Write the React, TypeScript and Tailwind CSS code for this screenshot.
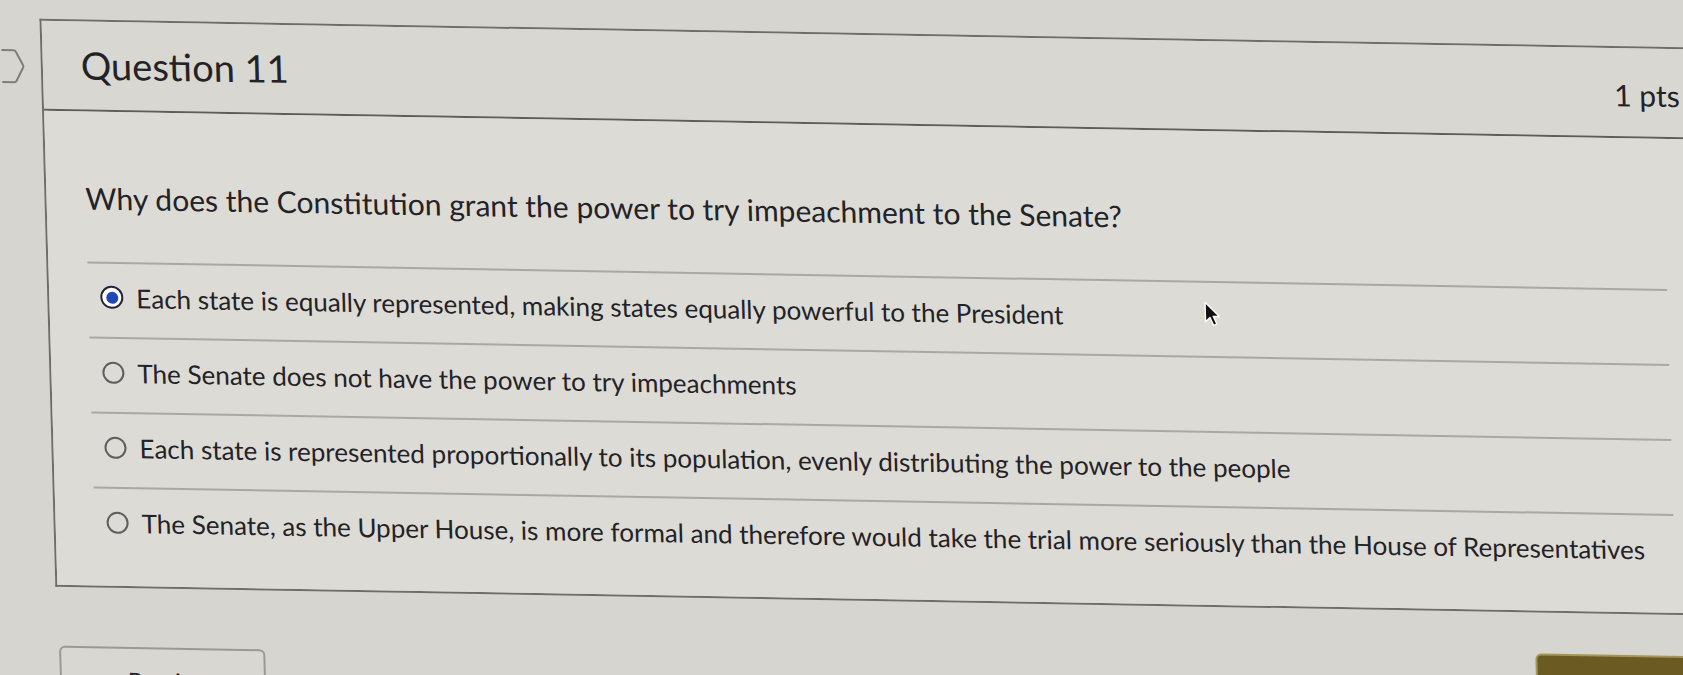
export default function App() {
  const options = [
    { text: "Each state is equally represented, making states equally powerful to the President", selected: true },
    { text: "The Senate does not have the power to try impeachments", selected: false },
    { text: "Each state is represented proportionally to its population, evenly distributing the power to the people", selected: false },
    { text: "The Senate, as the Upper House, is more formal and therefore would take the trial more seriously than the House of Representatives", selected: false },
  ];
  return (
    <div className="relative w-[1683px] h-[675px] overflow-hidden bg-[#d7d5d0] text-[#232226] [font-family:Lato,sans-serif]">
      <div className="relative origin-top-left skew-x-[1.6deg] skew-y-[1deg] pt-[18px]">
        <div className="flex">
          <div className="w-[39px] shrink-0">
            <svg className="mt-[30px]" width="24" height="36" viewBox="0 0 24 36">
              <path
                d="M-10 2 H12 Q13.5 2 14.5 3.8 L21 16.3 Q22 18 21 19.7 L14.5 32.2 Q13.5 34 12 34 H-10"
                fill="none"
                stroke="#7f7d79"
                strokeWidth="2"
              />
            </svg>
          </div>
          <div className="w-[1720px] shrink-0">
            <div className="border-l-2 border-t-2 border-b-2 border-[#6f6d6a]">
              <div className="h-[90px] border-b-2 border-[#5f5d5a] bg-[#d9d7d2] flex items-baseline pt-[24px] pl-[38px]">
                <span className="text-[38px] leading-none">Question 11</span>
                <span className="ml-auto pr-[82px] text-[30px] leading-none">1 pts</span>
              </div>
              <div className="bg-[#dddbd6] pt-[68px] pl-[39px] pb-[24px]">
                <p className="text-[30px] leading-[36px]">
                  Why does the Constitution grant the power to try impeachment to the Senate?
                </p>
                <div className="mt-[46px] w-[1579px]">
                  {options.map((o, i) => (
                    <div key={i} className="h-[75px] border-t-2 border-[#aaa8a3] flex items-center pl-[12px] pb-[6px]">
                      {o.selected ? (
                        <span className="w-[23px] h-[23px] shrink-0 rounded-full border-[2.5px] border-[#23263a] bg-white flex items-center justify-center">
                          <span className="w-[12px] h-[12px] rounded-full bg-[#1d49b8]" />
                        </span>
                      ) : (
                        <span className="w-[22px] h-[22px] shrink-0 rounded-full border-2 border-[#5f5e60]" />
                      )}
                      <span className="ml-[13px] text-[26px] leading-[32px] whitespace-nowrap">{o.text}</span>
                    </div>
                  ))}
                </div>
              </div>
            </div>
            <div className="mt-[59px] flex items-start">
              <div className="ml-[2px] w-[206px] h-[52px] rounded-[6px] border-2 border-[#9b9995] bg-[#d9d7d2] pl-[66px] pt-[20px] text-[24px] leading-none">
                Previous
              </div>
              <div className="ml-auto -mt-[18px] w-[242px] h-[70px] rounded-[6px] border-2 border-[#a39659] bg-[#6b5a22]" />
            </div>
          </div>
        </div>
        <svg className="absolute left-[1195px] top-[280px]" width="17" height="27" viewBox="0 0 16 25">
          <path
            d="M1.5 1 L1.5 19.5 L5.8 15.3 L9 22.8 L12 21.4 L8.8 14.2 L14.6 14.2 Z"
            fill="#111"
            stroke="#fff"
            strokeWidth="1.3"
            strokeLinejoin="round"
          />
        </svg>
      </div>
    </div>
  );
}
